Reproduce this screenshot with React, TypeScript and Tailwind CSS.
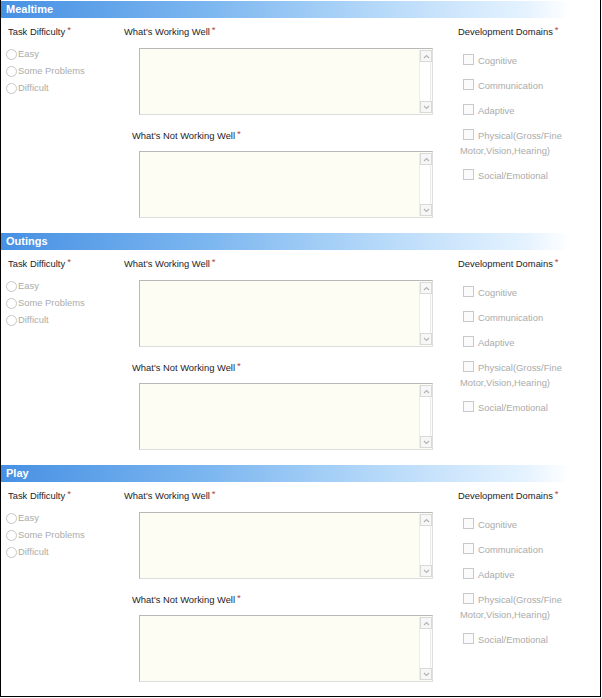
const sections = ["Mealtime", "Outings", "Play"];

const difficulties = ["Easy", "Some Problems", "Difficult"];

function Label({ text, className = "" }: { text: string; className?: string }) {
  return (
    <div className={`h-[12px] leading-[12px] text-[9.4px] text-[#1c1c2a] whitespace-nowrap ${className}`}>
      {text}
      <span className="relative -top-[2px] ml-[2px] text-[9.5px] text-[#a84a4a]">*</span>
    </div>
  );
}

function Arrow({ up }: { up?: boolean }) {
  return (
    <div className="flex h-[12px] w-[12px] items-center justify-center border border-[#d9d9d9] bg-[#f7f7f7]">
      <svg width="7" height="5" viewBox="0 0 7 5">
        <polyline
          points={up ? "1,4 3.5,1.5 6,4" : "1,1 3.5,3.5 6,1"}
          fill="none"
          stroke="#b4b4b4"
          strokeWidth="1.2"
        />
      </svg>
    </div>
  );
}

function TextBox() {
  return (
    <div className="ml-[15px] flex h-[67px] w-[294px] border border-t-[#b8b8b8] border-l-[#b8b8b8] border-r-[#dedede] border-b-[#dedede] bg-[#fdfdf3]">
      <div className="flex-1" />
      <div className="my-px mr-px flex w-[12px] flex-col justify-between border-x border-[#ececec] bg-white">
        <Arrow up />
        <Arrow />
      </div>
    </div>
  );
}

function Radio({ label }: { label: string }) {
  return (
    <div className="flex h-[17px] items-center">
      <span className="h-[11px] w-[11px] rounded-full border border-[#c6c6c6] bg-white" />
      <span className="ml-px text-[9.4px] text-[#ababab]">{label}</span>
    </div>
  );
}

function Box() {
  return (
    <span className="mr-[4px] ml-[3px] inline-block h-[11px] w-[11px] border border-[#c9c9c9] bg-[#fbfbfb] align-[-1px]" />
  );
}

function Domains() {
  return (
    <div className="mt-[15px] ml-[2px] flex w-[110px] flex-col gap-[10px] text-[9.4px] leading-[15px] text-[#ababab]">
      <div>
        <Box />
        Cognitive
      </div>
      <div>
        <Box />
        Communication
      </div>
      <div>
        <Box />
        Adaptive
      </div>
      <div>
        <Box />
        Physical(Gross/Fine
        <br />
        Motor,Vision,Hearing)
      </div>
      <div>
        <Box />
        Social/Emotional
      </div>
    </div>
  );
}

function Section({ title }: { title: string }) {
  return (
    <div className="h-[232px]">
      <div className="flex h-[17px] items-center bg-[linear-gradient(to_right,#4790e3_0%,#7db7f0_35%,#b9dbfa_65%,#e6f3ff_88%,#ffffff_95%)] pl-[5px] text-[11px] font-bold text-white">
        {title}
      </div>
      <div className="flex pt-[8px]">
        <div className="w-[123px] pl-[5px]">
          <Label text="Task Difficulty" className="pl-[2px]" />
          <div className="mt-[8px] flex flex-col">
            {difficulties.map((d) => (
              <Radio key={d} label={d} />
            ))}
          </div>
        </div>
        <div className="w-[334px]">
          <Label text="What's Working Well" />
          <div className="mt-[10px]">
            <TextBox />
          </div>
          <Label text="What's Not Working Well" className="mt-[15px] ml-[8px]" />
          <div className="mt-[9px]">
            <TextBox />
          </div>
        </div>
        <div>
          <Label text="Development Domains" />
          <Domains />
        </div>
      </div>
    </div>
  );
}

export default function App() {
  return (
    <div className="h-[697px] w-[601px] overflow-hidden border-x border-b border-black bg-white pt-px font-['Liberation_Sans',Arial,sans-serif]">
      {sections.map((s) => (
        <Section key={s} title={s} />
      ))}
    </div>
  );
}
